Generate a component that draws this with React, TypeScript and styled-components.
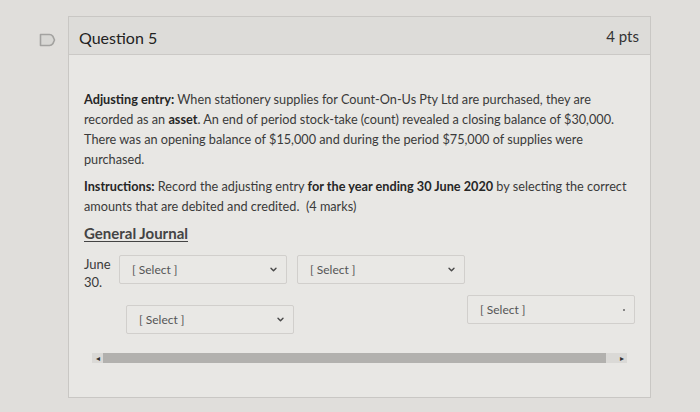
import React from 'react';
import styled, { createGlobalStyle } from 'styled-components';

const Global = createGlobalStyle`
  html, body {
    margin: 0;
    padding: 0;
    background: #e0dedb;
  }
  body {
    font-family: Lato, "Liberation Sans", Arial, sans-serif;
    color: #2f2f2f;
  }
`;

function FlagIcon() {
  return (
    <FlagWrap>
      <svg width="17" height="14" viewBox="0 0 17 14">
        <path
          d="M1.5 1.5 H10.5 Q12.5 1.5 13.8 3.2 L15.5 7 L13.8 10.8 Q12.5 12.5 10.5 12.5 H1.5 Z"
          fill="#d8d7d4"
          stroke="#a3a2a0"
          strokeWidth="1.6"
          strokeLinejoin="round"
        />
      </svg>
    </FlagWrap>
  );
}

function Chevron() {
  return (
    <svg width="7" height="5" viewBox="0 0 7 5">
      <path d="M1 1.2 L3.5 3.8 L6 1.2" fill="none" stroke="#4a4a4a" strokeWidth="1.4" strokeLinecap="round" strokeLinejoin="round" />
    </svg>
  );
}

function Select({ hideArrow }: { hideArrow?: boolean }) {
  return (
    <SelectBox>
      <span>[ Select ]</span>
      {hideArrow ? <Dot /> : <Chevron />}
    </SelectBox>
  );
}

export default function App() {
  return (
    <>
      <Global />
      <Page>
        <FlagIcon />
        <Card>
          <Header>
            <Title>Question 5</Title>
            <Points>4 pts</Points>
          </Header>
          <Body>
            <Para>
              <b>Adjusting entry:</b> When stationery supplies for Count-On-Us Pty Ltd are purchased, they are
              recorded as an <b>asset</b>. An end of period stock-take (count) revealed a closing balance of $30,000.
              There was an opening balance of $15,000 and during the period $75,000 of supplies were
              purchased.
            </Para>
            <Para>
              <b>Instructions:</b> Record the adjusting entry <b>for the year ending 30 June 2020</b> by selecting the correct
              amounts that are debited and credited.&nbsp; (4 marks)
            </Para>
            <Heading>General Journal</Heading>
            <Row>
              <DateCell>
                June
                <br />
                30.
              </DateCell>
              <Select />
              <Select />
            </Row>
            <Row $second>
              <Indent>
                <Select />
              </Indent>
              <Raised>
                <Select hideArrow />
              </Raised>
            </Row>
            <Scrollbar>
              <ScrollBtn>◂</ScrollBtn>
              <Thumb />
              <Track />
              <ScrollBtn>▸</ScrollBtn>
            </Scrollbar>
          </Body>
        </Card>
      </Page>
    </>
  );
}

const Page = styled.div`
  display: flex;
  align-items: flex-start;
  padding: 16px 0 0 39px;
`;

const FlagWrap = styled.div`
  margin-top: 17px;
  width: 17px;
  margin-right: 12px;
  display: flex;
`;

const Card = styled.div`
  width: 583px;
  border: 1px solid #c9c7c4;
  background: #e8e7e4;
  box-sizing: border-box;
`;

const Header = styled.div`
  height: 37px;
  background: #dddcd9;
  border-bottom: 1px solid #cbc9c6;
  display: flex;
  align-items: center;
  justify-content: space-between;
  padding: 0 11px 0 10px;
`;

const Title = styled.div`
  font-size: 16px;
  color: #222;
  padding-top: 3px;
`;

const Points = styled.div`
  font-size: 15px;
  color: #333;
`;

const Body = styled.div`
  padding: 34px 16px 34px 15px;
`;

const Para = styled.p`
  margin: 0 0 7px;
  font-size: 12.7px;
  line-height: 20px;
  color: #3a3a3a;
  b {
    color: #262626;
  }
`;

const Heading = styled.div`
  margin-top: 7px;
  font-size: 15px;
  font-weight: 700;
  line-height: 20px;
  color: #444;
  text-decoration: underline;
  text-underline-offset: 2px;
`;

const Row = styled.div<{ $second?: boolean }>`
  display: flex;
  align-items: flex-start;
  gap: 10px;
  margin-top: ${(p) => (p.$second ? '4px' : '12px')};
`;

const DateCell = styled.div`
  width: 29px;
  margin-right: -4px;
  font-size: 13px;
  line-height: 18px;
  color: #3a3a3a;
`;

const Indent = styled.div`
  margin-left: 42px;
  margin-top: 10px;
`;

const Raised = styled.div`
  margin-left: 163px;
`;

const SelectBox = styled.div`
  width: 168px;
  height: 29px;
  box-sizing: border-box;
  border: 1px solid #d1cfcc;
  border-radius: 2px;
  background: #e9e8e5;
  display: flex;
  align-items: center;
  justify-content: space-between;
  padding: 0 9px 0 12px;
  font-size: 12px;
  color: #555;
`;

const Dot = styled.span`
  width: 2px;
  height: 2px;
  border-radius: 1px;
  background: #666;
`;

const Scrollbar = styled.div`
  margin: 19px 7px 0 8px;
  height: 10px;
  display: flex;
  background: #dad9d6;
`;

const ScrollBtn = styled.div`
  width: 11px;
  font-size: 8px;
  line-height: 10px;
  text-align: center;
  color: #333;
`;

const Thumb = styled.div`
  width: 503px;
  background: #b2b1ae;
`;

const Track = styled.div`
  flex: 1;
`;
